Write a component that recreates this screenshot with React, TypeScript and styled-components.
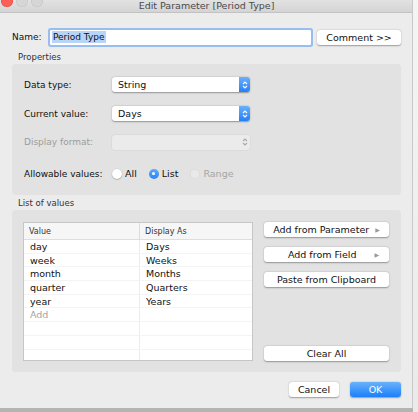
import React from 'react';
import styled, { createGlobalStyle } from 'styled-components';

const GlobalStyle = createGlobalStyle`
  html, body {
    margin: 0;
    padding: 0;
    background: #9a9a9a;
  }
  body {
    width: 418px;
    height: 412px;
    overflow: hidden;
    font-family: 'DejaVu Sans', 'Liberation Sans', sans-serif;
    font-size: 9px;
    color: #111;
  }
`;

const Screen = styled.div`
  display: flex;
  width: 418px;
  height: 412px;
  background: #b4b4b4;
`;

const Window = styled.div`
  display: flex;
  flex-direction: column;
  width: 413px;
  height: 408px;
  background: #ececec;
  border-right: 1px solid #c9c9c9;
  box-sizing: border-box;
  overflow: hidden;
`;

const SideStrip = styled.div`
  flex: 1;
  height: 412px;
  background: linear-gradient(180deg, #f4f4f4 0%, #eaeaea 100%);
`;

const TitleBar = styled.div`
  display: flex;
  align-items: flex-start;
  height: 12px;
  flex-shrink: 0;
  background: linear-gradient(180deg, #e2e2e2, #d4d4d4);
  border-bottom: 1px solid #c2c2c2;
  overflow: hidden;
`;

const Lights = styled.div`
  display: flex;
  gap: 3px;
  margin: -5px 0 0 1px;
  width: 60px;
`;

const Light = styled.span<{ $color: string; $edge: string }>`
  width: 12px;
  height: 12px;
  border-radius: 50%;
  background: ${({ $color }) => $color};
  box-shadow: inset 0 0 0 0.5px ${({ $edge }) => $edge};
`;

const Title = styled.div`
  flex: 1;
  text-align: center;
  margin: 0 60px 0 0;
  font-size: 9.5px;
  line-height: 11px;
  color: #4a4a4a;
`;

const Body = styled.div`
  display: flex;
  flex-direction: column;
  padding: 15px 11px 0 12px;
`;

const NameRow = styled.div`
  display: flex;
  align-items: center;
  height: 18px;
`;

const NameLabel = styled.span`
  width: 36px;
`;

const NameInput = styled.div`
  width: 259px;
  height: 13px;
  background: #fff;
  border: 1px solid #fff;
  box-shadow: 0 0 0 2px #98bdf0;
  border-radius: 1px;
  display: flex;
  align-items: center;
  padding-left: 1px;
  margin-left: 2px;
`;

const Selected = styled.span`
  background: #b8d5f8;
  line-height: 12px;
  padding: 0 1px;
`;

const PushButton = styled.button<{ $w: number; $align?: string }>`
  width: ${({ $w }) => $w}px;
  height: 15px;
  padding: 0 8px;
  border: none;
  border-radius: 3px;
  background: #fff;
  box-shadow: 0 0.5px 1.5px rgba(0, 0, 0, 0.35);
  font-family: inherit;
  font-size: 9.5px;
  color: #111;
  display: flex;
  align-items: center;
  justify-content: ${({ $align }) => $align || 'center'};
  gap: 6px;
`;

const CommentButton = styled(PushButton)`
  margin-left: 6px;
`;

const SectionLabel = styled.div<{ $top: number }>`
  font-size: 8.5px;
  color: #333;
  padding-left: 6px;
  margin-top: ${({ $top }) => $top}px;
  height: 13px;
  line-height: 13px;
`;

const Group = styled.div<{ $h: number }>`
  height: ${({ $h }) => $h}px;
  background: #e2e2e2;
  border-radius: 4px;
  box-sizing: border-box;
`;

const PropsGrid = styled.div`
  display: grid;
  grid-template-columns: 88px 138px;
  grid-template-rows: 15px 15px 14px 15px;
  row-gap: 14px;
  padding: 13px 0 0 12px;
  align-items: center;
  & > :nth-child(7),
  & > :nth-child(8) {
    margin-top: 6px;
  }
`;

const FieldLabel = styled.span<{ $disabled?: boolean }>`
  font-size: 9px;
  white-space: nowrap;
  color: ${({ $disabled }) => ($disabled ? '#9c9c9c' : '#111')};
`;

const Select = styled.div<{ $disabled?: boolean }>`
  height: 15px;
  display: flex;
  align-items: center;
  border-radius: 3px;
  background: ${({ $disabled }) => ($disabled ? '#ebebeb' : '#fff')};
  box-shadow: ${({ $disabled }) =>
    $disabled ? '0 0 0 0.5px rgba(0,0,0,0.06)' : '0 0.5px 1.5px rgba(0, 0, 0, 0.35)'};
  overflow: hidden;
`;

const SelectText = styled.span`
  flex: 1;
  padding-left: 6px;
  font-size: 9.5px;
`;

const Stepper = styled.span<{ $disabled?: boolean }>`
  width: 11px;
  height: 100%;
  display: flex;
  align-items: center;
  justify-content: center;
  background: ${({ $disabled }) =>
    $disabled ? 'transparent' : 'linear-gradient(180deg, #6ab0fb 0%, #2480f6 100%)'};
`;

const RadioRow = styled.div`
  display: flex;
  align-items: center;
  gap: 3px;
`;

const Radio = styled.span<{ $on?: boolean; $disabled?: boolean }>`
  width: 10px;
  height: 10px;
  border-radius: 50%;
  box-sizing: border-box;
  background: ${({ $on, $disabled }) =>
    $on ? 'linear-gradient(180deg, #5eaaf9, #2a85f6)' : $disabled ? '#e9e9e9' : '#fff'};
  box-shadow: ${({ $on, $disabled }) =>
    $on ? 'none' : $disabled ? 'inset 0 0 0 0.5px #d3d3d3' : '0 0.5px 1.2px rgba(0,0,0,0.4)'};
  display: flex;
  align-items: center;
  justify-content: center;
  &::after {
    content: '';
    width: 3px;
    height: 3px;
    border-radius: 50%;
    background: ${({ $on }) => ($on ? '#fff' : 'transparent')};
  }
`;

const RadioText = styled.span<{ $disabled?: boolean }>`
  font-size: 9.5px;
  margin-right: 9px;
  color: ${({ $disabled }) => ($disabled ? '#a5a5a5' : '#111')};
`;

const ListLayout = styled.div`
  display: flex;
  gap: 11px;
  padding: 12px 12px 0 11px;
`;

const Table = styled.div`
  width: 231px;
  height: 139px;
  background: #fff;
  border: 1px solid #c6c6c6;
  box-sizing: border-box;
  overflow: hidden;
`;

const HeaderRow = styled.div`
  display: grid;
  grid-template-columns: 115px 1fr;
  height: 16px;
  background: #f6f6f6;
  border-bottom: 1px solid #dedede;
  font-size: 8px;
  color: #333;
`;

const HeaderCell = styled.div`
  display: flex;
  align-items: center;
  padding-left: 5px;
  & + & {
    border-left: 1px solid #dcdcdc;
  }
`;

const Row = styled.div`
  display: grid;
  grid-template-columns: 115px 1fr;
  height: 13.7px;
  border-bottom: 1px solid #f4f4f4;
  box-sizing: border-box;
`;

const Cell = styled.div<{ $muted?: boolean }>`
  display: flex;
  align-items: center;
  padding-left: 6px;
  font-size: 9.5px;
  color: ${({ $muted }) => ($muted ? '#a3a3a3' : '#111')};
  & + & {
    border-left: 1px solid #ececec;
  }
`;

const ButtonColumn = styled.div`
  display: flex;
  flex-direction: column;
  gap: 10px;
  width: 125px;
  height: 139px;
`;

const Spacer = styled.div`
  flex: 1;
`;

const Arrow = styled.span<{ $left?: number }>`
  font-size: 6px;
  color: #9a9a9a;
  margin-left: ${({ $left }) => $left ?? 0}px;
`;

const Indented = styled.span`
  margin-left: 14px;
`;

const Footer = styled.div`
  display: flex;
  justify-content: flex-end;
  gap: 11px;
  padding: 10px 0 0 0;
`;

const OkButton = styled(PushButton)`
  background: linear-gradient(180deg, #69b1fb 0%, #1b80f9 100%);
  color: #fff;
`;

const values: [string, string][] = [
  ['day', 'Days'],
  ['week', 'Weeks'],
  ['month', 'Months'],
  ['quarter', 'Quarters'],
  ['year', 'Years'],
];

function Chevrons({ color }: { color: string }) {
  return (
    <svg width="6" height="10" viewBox="0 0 6 10">
      <path d="M1 4 L3 2 L5 4 M1 6 L3 8 L5 6" fill="none" stroke={color} strokeWidth="1.1" />
    </svg>
  );
}

export default function App() {
  return (
    <Screen>
      <GlobalStyle />
      <Window>
        <TitleBar>
          <Lights>
            <Light $color="#fc5f57" $edge="#de4a42" />
            <Light $color="#d6d6d6" $edge="#c1c1c1" />
            <Light $color="#d6d6d6" $edge="#c1c1c1" />
          </Lights>
          <Title>Edit Parameter [Period Type]</Title>
        </TitleBar>
        <Body>
          <NameRow>
            <NameLabel>Name:</NameLabel>
            <NameInput>
              <Selected>Period Type</Selected>
            </NameInput>
            <CommentButton $w={84}>Comment &gt;&gt;</CommentButton>
          </NameRow>

          <SectionLabel $top={5}>Properties</SectionLabel>
          <Group $h={131}>
            <PropsGrid>
              <FieldLabel>Data type:</FieldLabel>
              <Select>
                <SelectText>String</SelectText>
                <Stepper>
                  <Chevrons color="#fff" />
                </Stepper>
              </Select>
              <FieldLabel>Current value:</FieldLabel>
              <Select>
                <SelectText>Days</SelectText>
                <Stepper>
                  <Chevrons color="#fff" />
                </Stepper>
              </Select>
              <FieldLabel $disabled>Display format:</FieldLabel>
              <Select $disabled>
                <SelectText />
                <Stepper $disabled>
                  <Chevrons color="#a8a8a8" />
                </Stepper>
              </Select>
              <FieldLabel>Allowable values:</FieldLabel>
              <RadioRow>
                <Radio />
                <RadioText>All</RadioText>
                <Radio $on />
                <RadioText>List</RadioText>
                <Radio $disabled />
                <RadioText $disabled>Range</RadioText>
              </RadioRow>
            </PropsGrid>
          </Group>

          <SectionLabel $top={2}>List of values</SectionLabel>
          <Group $h={162}>
            <ListLayout>
              <Table>
                <HeaderRow>
                  <HeaderCell>Value</HeaderCell>
                  <HeaderCell>Display As</HeaderCell>
                </HeaderRow>
                {values.map(([v, d]) => (
                  <Row key={v}>
                    <Cell>{v}</Cell>
                    <Cell>{d}</Cell>
                  </Row>
                ))}
                <Row>
                  <Cell $muted>Add</Cell>
                  <Cell />
                </Row>
                {[0, 1, 2, 3].map((i) => (
                  <Row key={i}>
                    <Cell />
                    <Cell />
                  </Row>
                ))}
              </Table>
              <ButtonColumn>
                <PushButton $w={125}>
                  Add from Parameter <Arrow>▶</Arrow>
                </PushButton>
                <PushButton $w={125}>
                  <Indented>Add from Field</Indented>
                  <Arrow $left={12}>▶</Arrow>
                </PushButton>
                <PushButton $w={125}>Paste from Clipboard</PushButton>
                <Spacer />
                <PushButton $w={125}>Clear All</PushButton>
              </ButtonColumn>
            </ListLayout>
          </Group>

          <Footer>
            <PushButton $w={50}>Cancel</PushButton>
            <OkButton $w={51}>OK</OkButton>
          </Footer>
        </Body>
      </Window>
      <SideStrip />
    </Screen>
  );
}
